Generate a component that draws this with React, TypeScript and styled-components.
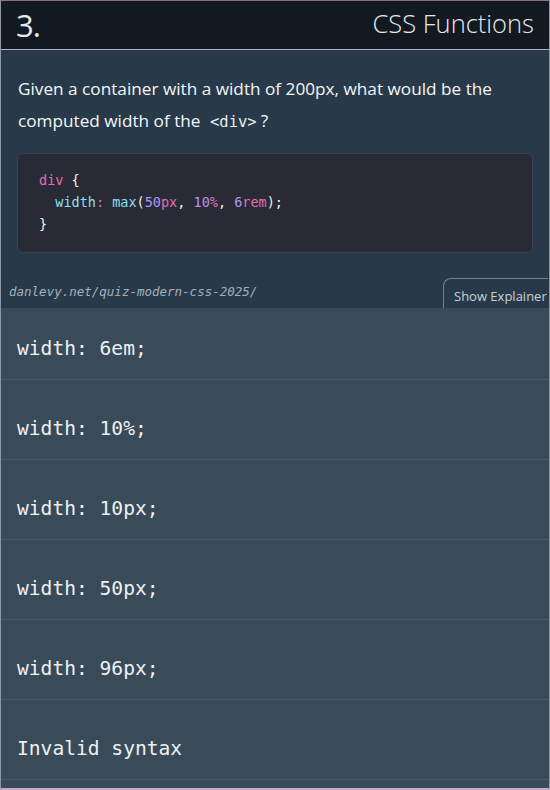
import styled, { createGlobalStyle } from 'styled-components';

const GlobalStyle = createGlobalStyle`
  html, body {
    margin: 0;
    padding: 0;
    background: #394a59;
  }
  * {
    box-sizing: border-box;
  }
`;

const options = [
  'width: 6em;',
  'width: 10%;',
  'width: 10px;',
  'width: 50px;',
  'width: 96px;',
  'Invalid syntax',
];

export default function App() {
  return (
    <>
      <GlobalStyle />
      <Card>
        <Header>
          <Number>3.</Number>
          <Category>CSS Functions</Category>
        </Header>
        <Question>
          <Prompt>
            Given a container with a width of 200px, what would be the computed
            width of the <InlineCode>&lt;div&gt;</InlineCode>?
          </Prompt>
          <CodeBlock>
            <div>
              <Tok $c="#e36fb0">div</Tok> {'{'}
            </div>
            <div>
              {'  '}
              <Tok $c="#8be0f0">width</Tok>
              <Tok $c="#e36fb0">:</Tok> <Tok $c="#8be0f0">max</Tok>(
              <Tok $c="#b494f0">50</Tok>
              <Tok $c="#e36fb0">px</Tok>, <Tok $c="#b494f0">10</Tok>
              <Tok $c="#e36fb0">%</Tok>, <Tok $c="#b494f0">6</Tok>
              <Tok $c="#e36fb0">rem</Tok>);
            </div>
            <div>{'}'}</div>
          </CodeBlock>
          <FooterRow>
            <SourceLink>danlevy.net/quiz-modern-css-2025/</SourceLink>
            <ExplainerTab>Show Explainer</ExplainerTab>
          </FooterRow>
        </Question>
        <Options>
          {options.map((o) => (
            <Option key={o}>{o}</Option>
          ))}
        </Options>
      </Card>
    </>
  );
}

const Card = styled.div`
  width: 550px;
  height: 790px;
  display: flex;
  flex-direction: column;
  border-top: 1px solid #8a6f92;
  border-bottom: 2px solid #c7a9c9;
  border-left: 1px solid #8d98a3;
  border-right: 1px solid #8d98a3;
  overflow: hidden;
  background: #394a59;
`;

const Header = styled.header`
  height: 49px;
  flex: none;
  display: flex;
  align-items: flex-end;
  justify-content: space-between;
  padding: 0 15px 4px 15px;
  background: #121920;
  border-bottom: 1px solid #a9b3bc;
  color: #e6e9ec;
  font-family: 'Open Sans', 'Liberation Sans', sans-serif;
`;

const Number = styled.span`
  font-size: 31px;
  font-weight: 400;
  line-height: 40px;
  letter-spacing: -1px;
`;

const Category = styled.span`
  font-size: 25.5px;
  font-weight: 300;
  line-height: 40px;
  align-self: flex-start;
  margin-top: 2px;
`;

const Question = styled.section`
  flex: none;
  background: #283a49;
  padding: 23px 16px 0 16px;
`;

const Prompt = styled.p`
  margin: 0 0 16px 1px;
  font-family: 'Open Sans', 'Liberation Sans', sans-serif;
  font-size: 17.2px;
  line-height: 32px;
  color: #f4f6f8;
`;

const InlineCode = styled.code`
  font-family: 'DejaVu Sans Mono', 'Liberation Mono', monospace;
  font-size: 15.5px;
  line-height: 1;
  margin: 0 4px 0 5px;
  color: #e8ecef;
`;

const CodeBlock = styled.pre`
  margin: 0;
  height: 100px;
  padding: 15px 21px;
  background: #282a36;
  border: 1px solid #3b4150;
  border-radius: 6px;
  font-family: 'DejaVu Sans Mono', 'Liberation Mono', monospace;
  font-size: 13.5px;
  line-height: 22px;
  color: #f1f1f1;
  white-space: pre;
`;

const Tok = styled.span<{ $c: string }>`
  color: ${(p) => p.$c};
`;

const FooterRow = styled.div`
  height: 55px;
  margin: 0 -15px 0 -16px;
  display: flex;
  align-items: flex-end;
  justify-content: space-between;
`;

const SourceLink = styled.span`
  font-family: 'DejaVu Sans Mono', 'Liberation Mono', monospace;
  font-style: italic;
  font-size: 12.5px;
  color: #a3b1bd;
  padding: 0 0 9px 8px;
`;

const ExplainerTab = styled.button`
  height: 30px;
  width: 105px;
  padding: 4px 0 0 10px;
  text-align: left;
  background: transparent;
  border: 1px solid #76838f;
  border-bottom: none;
  border-right: none;
  border-radius: 8px 0 0 0;
  font-family: 'Open Sans', 'Liberation Sans', sans-serif;
  font-size: 13px;
  color: #c9d1d8;
  white-space: nowrap;
`;

const Options = styled.ul`
  list-style: none;
  margin: 0;
  padding: 0;
  flex: 1;
  background: #394a59;
`;

const Option = styled.li`
  height: 72px;
  margin-bottom: 8px;
  display: flex;
  align-items: center;
  padding: 9px 0 0 16px;
  border-bottom: 1px solid #4a5b6b;
  font-family: 'DejaVu Sans Mono', 'Liberation Mono', monospace;
  font-size: 19.6px;
  color: #eef1f3;
`;
